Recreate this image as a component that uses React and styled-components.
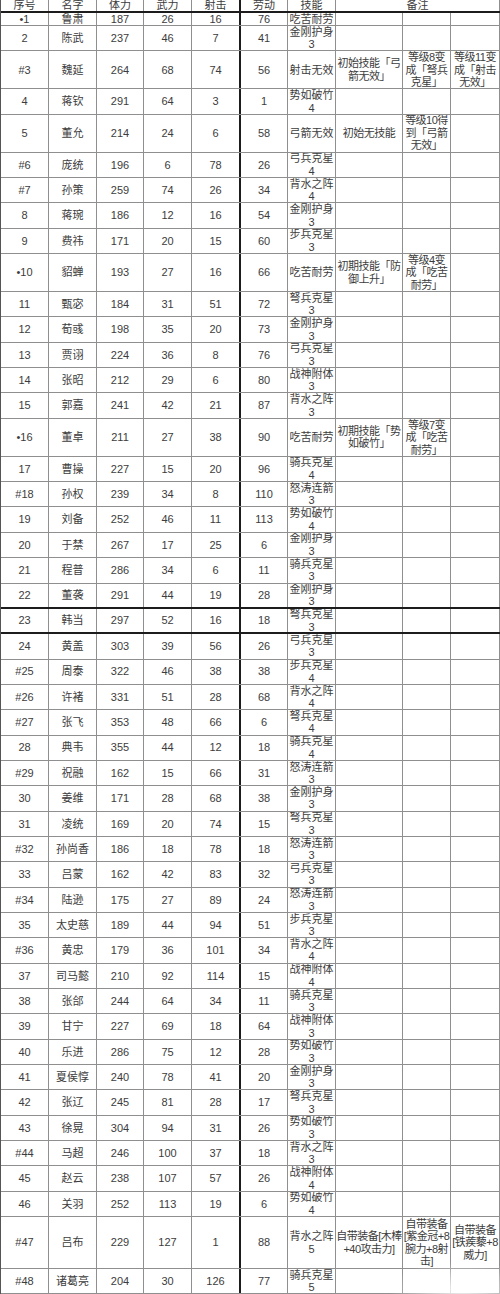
import React from 'react';
import styled, { createGlobalStyle } from 'styled-components';

const Global = createGlobalStyle`
  *, *::before, *::after { box-sizing: border-box; }
  html, body { margin: 0; padding: 0; background: #fff; }
  body { font-family: "Liberation Sans", "Noto Sans CJK SC", sans-serif; }
`;

const LINE = '#8f8f8f';
const HEAVY = '#1c1c1c';

const Sheet = styled.div`
  position: relative;
  width: 500px;
  height: 1294px;
  overflow: hidden;
  background: #fff;
  border-left: 1px solid #555;
  color: #3c3c3c;
  font-size: 11px;
`;

const Row = styled.div`
  display: grid;
  grid-template-columns: 48px 48px 47px 48px 49px 47px 48px 67px 48px 49px;
  height: ${p => p.$h}px;
  border-bottom: ${p => (p.$thick ? `2px solid ${HEAVY}` : `1px solid ${LINE}`)};
`;

const Cell = styled.div`
  grid-column: span ${p => p.$span || 1};
  display: flex;
  align-items: center;
  justify-content: center;
  text-align: center;
  white-space: pre;
  line-height: 12.5px;
  letter-spacing: ${p => (p.$tight ? '-0.5px' : '0')};
  overflow: hidden;
  border-right: ${p => (p.$heavy ? `2px solid ${HEAVY}` : `1px solid ${LINE}`)};
`;

const Watermark = styled.div`
  position: absolute;
  right: 0;
  bottom: 0;
  width: 110px;
  height: 32px;
  background: radial-gradient(ellipse at 65% 85%, rgba(255,255,255,0.9), rgba(255,255,255,0) 72%);
  pointer-events: none;
`;

const P = 25.35;

const rows = [
  ['•1', '鲁肃', 187, 26, 16, 76, '吃苦耐劳', [], 13],
  ['2', '陈武', 237, 46, 7, 41, '金刚护身\n3', []],
  ['#3', '魏延', 264, 68, 74, 56, '射击无效', ['初始技能「弓\n箭无效」', '等级8变\n成「弩兵\n克星」', '等级11变\n成「射击\n无效」'], 38],
  ['4', '蒋钦', 291, 64, 3, 1, '势如破竹\n4', []],
  ['5', '董允', 214, 24, 6, 58, '弓箭无效', ['初始无技能', '等级10得\n到「弓箭\n无效」'], 38],
  ['#6', '庞统', 196, 6, 78, 26, '弓兵克星\n4', []],
  ['#7', '孙策', 259, 74, 26, 34, '背水之阵\n4', []],
  ['8', '蒋琬', 186, 12, 16, 54, '金刚护身\n3', []],
  ['9', '费祎', 171, 20, 15, 60, '步兵克星\n3', []],
  ['•10', '貂蝉', 193, 27, 16, 66, '吃苦耐劳', ['初期技能「防\n御上升」', '等级4变\n成「吃苦\n耐劳」'], 38],
  ['11', '甄宓', 184, 31, 51, 72, '弩兵克星\n3', []],
  ['12', '荀彧', 198, 35, 20, 73, '金刚护身\n3', []],
  ['13', '贾诩', 224, 36, 8, 76, '弓兵克星\n3', []],
  ['14', '张昭', 212, 29, 6, 80, '战神附体\n3', []],
  ['15', '郭嘉', 241, 42, 21, 87, '背水之阵\n3', []],
  ['•16', '董卓', 211, 27, 38, 90, '吃苦耐劳', ['初期技能「势\n如破竹」', '等级7变\n成「吃苦\n耐劳」'], 38],
  ['17', '曹操', 227, 15, 20, 96, '骑兵克星\n4', []],
  ['#18', '孙权', 239, 34, 8, 110, '怒涛连箭\n3', []],
  ['19', '刘备', 252, 46, 11, 113, '势如破竹\n4', []],
  ['20', '于禁', 267, 17, 25, 6, '金刚护身\n3', []],
  ['21', '程普', 286, 34, 6, 11, '骑兵克星\n3', []],
  ['22', '董袭', 291, 44, 19, 28, '金刚护身\n3', [], P, true],
  ['23', '韩当', 297, 52, 16, 18, '弩兵克星\n3', [], P, true],
  ['24', '黄盖', 303, 39, 56, 26, '弓兵克星\n3', []],
  ['#25', '周泰', 322, 46, 38, 38, '步兵克星\n4', []],
  ['#26', '许褚', 331, 51, 28, 68, '背水之阵\n4', []],
  ['#27', '张飞', 353, 48, 66, 6, '弩兵克星\n4', []],
  ['28', '典韦', 355, 44, 12, 18, '骑兵克星\n4', []],
  ['#29', '祝融', 162, 15, 66, 31, '怒涛连箭\n3', []],
  ['30', '姜维', 171, 28, 68, 38, '金刚护身\n3', []],
  ['31', '凌统', 169, 20, 74, 15, '弩兵克星\n3', []],
  ['#32', '孙尚香', 186, 18, 78, 18, '怒涛连箭\n3', []],
  ['33', '吕蒙', 162, 42, 83, 32, '弓兵克星\n3', []],
  ['#34', '陆逊', 175, 27, 89, 24, '怒涛连箭\n3', []],
  ['35', '太史慈', 189, 44, 94, 51, '步兵克星\n3', []],
  ['#36', '黄忠', 179, 36, 101, 34, '背水之阵\n4', []],
  ['37', '司马懿', 210, 92, 114, 15, '战神附体\n4', []],
  ['38', '张郃', 244, 64, 34, 11, '骑兵克星\n3', []],
  ['39', '甘宁', 227, 69, 18, 64, '战神附体\n3', []],
  ['40', '乐进', 286, 75, 12, 28, '势如破竹\n3', []],
  ['41', '夏侯惇', 240, 78, 41, 20, '金刚护身\n3', []],
  ['42', '张辽', 245, 81, 28, 17, '弩兵克星\n3', []],
  ['43', '徐晃', 304, 94, 31, 26, '势如破竹\n3', []],
  ['#44', '马超', 246, 100, 37, 18, '背水之阵\n3', []],
  ['45', '赵云', 238, 107, 57, 26, '战神附体\n4', []],
  ['46', '关羽', 252, 113, 19, 6, '势如破竹\n4', []],
  ['#47', '吕布', 229, 127, 1, 88, '背水之阵\n5', ['自带装备[木棒\n+40攻击力]', '自带装备\n[紫金冠+8\n腕力+8射\n击]', '自带装备\n[铁蒺藜+8\n威力]'], 52],
  ['#48', '诸葛亮', 204, 30, 126, 77, '骑兵克星\n5', []],
];

const headers = ['序号', '名字', '体力', '武力', '射击', '劳动', '技能'];

export default function App() {
  return (
    <>
      <Global />
      <Sheet>
        <Row $h={13} $thick>
          {headers.map((h, i) => (
            <Cell key={h} $heavy={i === 4}>{h}</Cell>
          ))}
          <Cell $span={3}>备注</Cell>
        </Row>
        {rows.map(([id, name, hp, str, shoot, labor, skill, notes, h = P, thick]) => (
          <Row key={id} $h={h} $thick={thick}>
            <Cell>{id}</Cell>
            <Cell>{name}</Cell>
            <Cell>{hp}</Cell>
            <Cell>{str}</Cell>
            <Cell $heavy>{shoot}</Cell>
            <Cell>{labor}</Cell>
            <Cell>{skill}</Cell>
            {[0, 1, 2].map(i => (
              <Cell key={i} $tight>{notes[i] || ''}</Cell>
            ))}
          </Row>
        ))}
        <Watermark />
      </Sheet>
    </>
  );
}
